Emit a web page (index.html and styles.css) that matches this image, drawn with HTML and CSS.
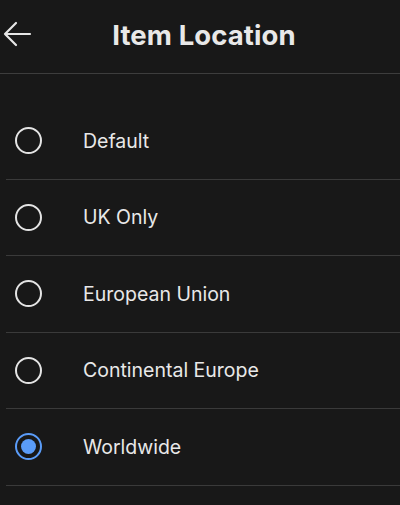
FILE: index.html
```html
<!DOCTYPE html>
<html lang="en">
<head>
    <meta charset="UTF-8">
    <meta name="viewport" content="width=device-width, initial-scale=1.0">
    <title>Item Location</title>
    <link rel="stylesheet" href="styles.css">
</head>
<body>
    <div class="header">
        <button class="back" aria-label="Back">
            <svg width="30" height="26" viewBox="0 0 30 26">
                <path d="M28 13H3M14 2L3 13l11 11" fill="none" stroke="#e6e6e6" stroke-width="2.2" stroke-linecap="round" stroke-linejoin="round"/>
            </svg>
        </button>
        <h1>Item Location</h1>
    </div>

    <ul class="options">
        <li class="option"><span class="radio"></span>Default</li>
        <li class="option"><span class="radio"></span>UK Only</li>
        <li class="option"><span class="radio"></span>European Union</li>
        <li class="option"><span class="radio"></span>Continental Europe</li>
        <li class="option"><span class="radio checked"></span>Worldwide</li>
    </ul>
</body>
</html>
```

FILE: styles.css
```css
body {
    margin: 0;
    font-family: Inter, "Open Sans", sans-serif;
    background-color: #181818;
    color: #e8e8e8;
    height: 505px;
    overflow: hidden;
}

.header {
    height: 73px;
    display: flex;
    align-items: center;
    justify-content: center;
    position: relative;
    border-bottom: 1px solid #3d3d3d;
}

.back {
    position: absolute;
    left: 2px;
    top: 21px;
    background: none;
    border: none;
    padding: 0;
    line-height: 0;
}

h1 {
    margin: 0 0 4px 8px;
    font-size: 27.5px;
    font-weight: 700;
    letter-spacing: 0.1px;
    color: #e8e8e8;
}

.options {
    list-style: none;
    margin: 29px 0 0 6px;
    padding: 0;
}

.option {
    height: 75.5px;
    display: flex;
    align-items: center;
    border-bottom: 1px solid #3a3a3a;
    font-size: 19.5px;
    padding-left: 9px;
}

.radio {
    width: 23px;
    height: 23px;
    border: 2.5px solid #e4e4e4;
    border-radius: 50%;
    margin-right: 41px;
    box-sizing: content-box;
    flex-shrink: 0;
    position: relative;
}

.radio.checked {
    border-color: #5a9cf8;
}

.radio.checked::after {
    content: "";
    position: absolute;
    left: 4px;
    top: 4px;
    width: 15px;
    height: 15px;
    border-radius: 50%;
    background-color: #5a9cf8;
}
```
